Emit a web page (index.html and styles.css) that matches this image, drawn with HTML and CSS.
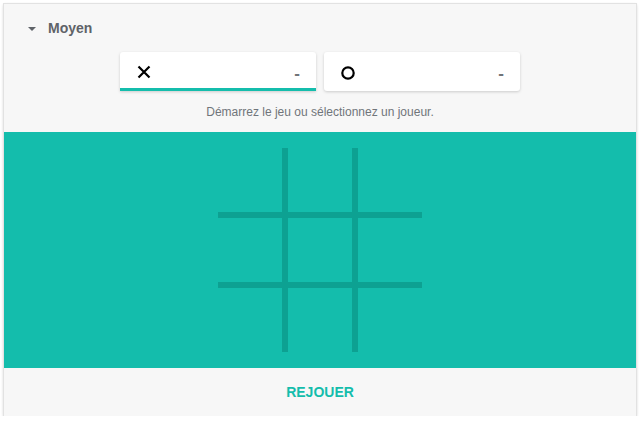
FILE: index.html
```html
<!DOCTYPE html>
<html lang="fr">
<head>
<meta charset="utf-8">
<link rel="stylesheet" href="styles.css">
</head>
<body>
<div class="card">
  <div class="header">
    <span class="caret"></span>
    <span class="level">Moyen</span>
  </div>
  <div class="players">
    <div class="player active">
      <svg class="mark" width="14" height="14" viewBox="0 0 14 14"><path d="M1.5 1.5 L12.5 12.5 M12.5 1.5 L1.5 12.5" stroke="#000" stroke-width="2.2" fill="none"/></svg>
      <span class="score">-</span>
    </div>
    <div class="player">
      <svg class="mark" width="14" height="14" viewBox="0 0 14 14"><circle cx="7" cy="7" r="5.7" stroke="#000" stroke-width="2.2" fill="none"/></svg>
      <span class="score">-</span>
    </div>
  </div>
  <div class="status">Démarrez le jeu ou sélectionnez un joueur.</div>
  <div class="board">
    <div class="grid">
      <div class="cell"></div><div class="cell"></div><div class="cell"></div>
      <div class="cell"></div><div class="cell"></div><div class="cell"></div>
      <div class="cell"></div><div class="cell"></div><div class="cell"></div>
    </div>
  </div>
  <div class="footer">
    <span class="replay">REJOUER</span>
  </div>
</div>
</body>
</html>
```
FILE: styles.css
```css
html, body {
  margin: 0;
  padding: 0;
  background: #ffffff;
}
body {
  padding: 4px 0 0 4px;
  font-family: "Liberation Sans", Arial, sans-serif;
}
.card {
  width: 632px;
  height: 412px;
  background: #f7f7f7;
  box-shadow: 0 0 0 1px #e2e2e2, 0 1px 3px rgba(0,0,0,0.3);
  display: flex;
  flex-direction: column;
}
.header {
  height: 48px;
  display: flex;
  align-items: center;
  padding-left: 24px;
  gap: 12px;
}
.caret {
  width: 0;
  height: 0;
  border-left: 4px solid transparent;
  border-right: 4px solid transparent;
  border-top: 4px solid #5f6368;
  margin-top: 1px;
}
.level {
  font-size: 14px;
  font-weight: bold;
  color: #5f6368;
}
.players {
  display: flex;
  justify-content: center;
  gap: 8px;
}
.player {
  width: 196px;
  height: 39px;
  box-sizing: border-box;
  background: #fff;
  border-radius: 3px;
  box-shadow: 0 1px 3px rgba(0,0,0,0.18);
  display: flex;
  align-items: center;
  justify-content: space-between;
  padding: 0 16px 0 17px;
}
.player.active {
  border-bottom: 3px solid #14bdac;
  border-radius: 3px 3px 0 0;
  padding-top: 2px;
}
.mark {
  display: block;
  margin-top: 2px;
}
.score {
  font-size: 17px;
  line-height: 17px;
  font-weight: bold;
  color: #707478;
  margin-top: 4px;
}
.status {
  height: 41px;
  display: flex;
  align-items: center;
  justify-content: center;
  font-size: 12px;
  color: #70757a;
}
.board {
  height: 236px;
  background: #14bdac;
  display: flex;
  align-items: center;
  justify-content: center;
}
.grid {
  width: 204px;
  height: 204px;
  display: grid;
  grid-template-columns: 64px 64px 64px;
  grid-template-rows: 64px 64px 64px;
  gap: 6px;
  background:
    linear-gradient(#0da192, #0da192) 64px 0 / 6px 100% no-repeat,
    linear-gradient(#0da192, #0da192) 134px 0 / 6px 100% no-repeat,
    linear-gradient(#0da192, #0da192) 0 64px / 100% 6px no-repeat,
    linear-gradient(#0da192, #0da192) 0 134px / 100% 6px no-repeat;
}
.footer {
  flex: 1;
  display: flex;
  align-items: center;
  justify-content: center;
}
.replay {
  font-size: 14px;
  font-weight: bold;
  color: #14bdac;
}
```
